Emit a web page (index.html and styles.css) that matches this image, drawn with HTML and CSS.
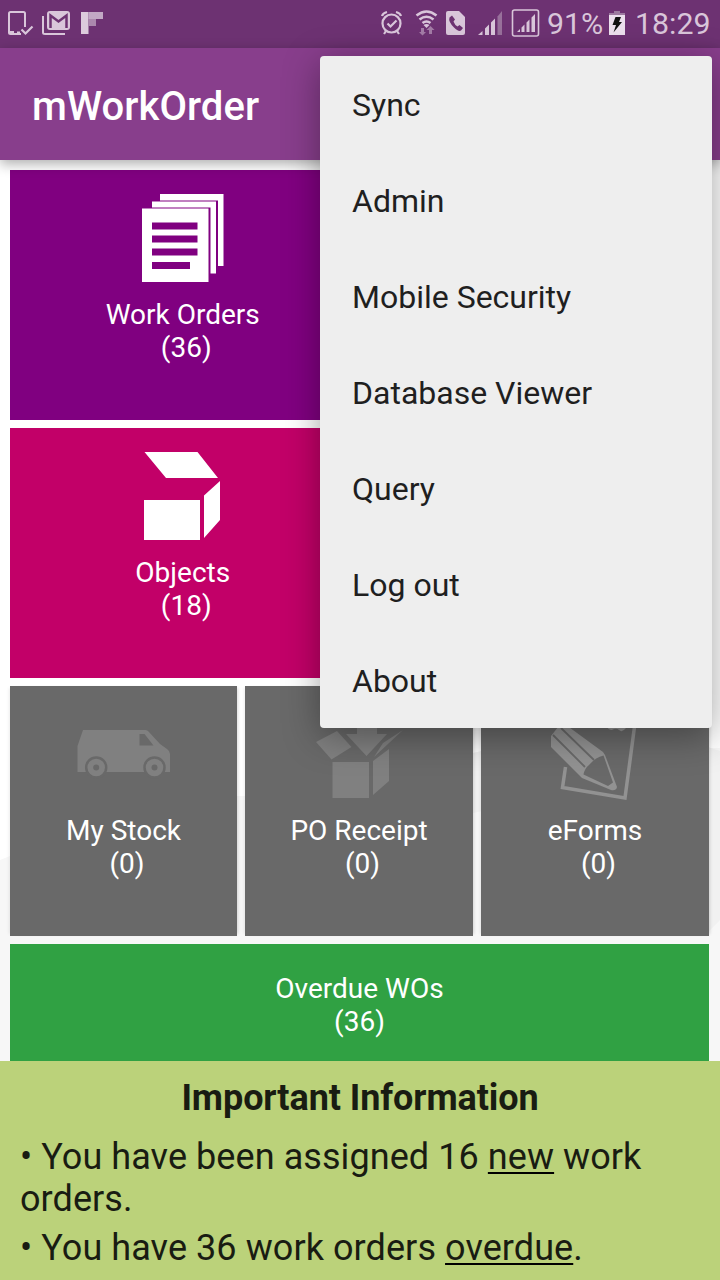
FILE: index.html
```html
<!DOCTYPE html>
<html lang="en">
<head>
<meta charset="utf-8">
<title>mWorkOrder</title>
<link rel="stylesheet" href="styles.css">
</head>
<body>
<div class="screen">
  <header class="status">
    <svg class="status-left" width="110" height="48" viewBox="0 0 110 48">
      <path d="M21 34H10.500Q9 34 9 32.500V13.500Q9 12 10.500 12H23.500Q25 12 25 13.500V27M9 32H14" fill="none" stroke="#d9c6da" stroke-width="2"/>
      <path d="M9 31h5v3H9zM17 31.500h3V34h-3z" fill="#d9c6da"/>
      <path d="M21.500 29.500l4 4 7-7" fill="none" stroke="#d9c6da" stroke-width="2.200"/>
      <path d="M43 16V32.500Q43 34 45 34H65" fill="none" stroke="#d9c6da" stroke-width="2"/>
      <rect x="48" y="12" width="21" height="17" rx="2" fill="#d9c6da" stroke="#d9c6da" stroke-width="2"/>
      <path d="M50.500 28V15.500l8 6 8-6V28" fill="none" stroke="#6d3272" stroke-width="2.500"/>
      <path d="M81 12h7.500v22H81z" fill="#dccbdc"/><path d="M88.500 12H103v7H88.500z" fill="#c2a8c5"/><path d="M88.500 19H96v7h-7.500z" fill="#ab88ad"/>
    </svg>
    <svg class="status-right" width="172" height="48" viewBox="370 0 172 48">
      <g fill="none" stroke="#d9c6da" stroke-width="2.200">
        <circle cx="391.500" cy="23.500" r="9"/><path d="M382 16q1-3 5-4M401 16q-1-3-5-4M386 31l-2 3M397 31l2 3M387.500 23.500l3 3 6-6"/>
      </g>
      <g fill="none" stroke="#d9c6da" stroke-width="2.600">
        <path d="M416.500 15.500q10-8 20 0M419.500 19.500q7-5.500 14 0M422.500 23q4-3 8 0"/>
      </g>
      <path d="M423.500 25q3-2 6 0l-3 3z" fill="#d9c6da"/>
      <path d="M421 28h3v4h2l-3.500 3.500L419 32h2zM429 34v-4h-2.500l4-4 4 4H432v4z" fill="#a37ca6"/>
      <path d="M448 11h11l6 6v16q0 2-2 2h-15q-2 0-2-2V13q0-2 2-2z" fill="#d9c6da"/>
      <path d="M449.500 17.500l2.500-2 3 4-1.500 2q1.500 4 4 5l2-1.500 3.500 3-2 2.500q-2.500 1.500-7-3-6-6-4.500-10z" fill="#6d3272"/>
      <path d="M478 35l4.500-4v4zM485 28.500l4-4V35h-4zM491 22.500l4-4V35h-4z" fill="#d9c6da"/>
      <path d="M497.500 16.500l4.500-5.500v24h-4.500z" fill="#98709b"/>
      <rect x="512.500" y="10" width="26" height="26" rx="2" fill="none" stroke="#d9c6da" stroke-width="1.600"/>
      <path d="M517 32l3-3v3zM521.500 27.500l3-3V32h-3zM526.500 22.500l3-3V32h-3zM531.500 17.500l3.500-3.500v18h-3.500z" fill="#d9c6da"/>
    </svg>
    <span class="percent">91%</span>
    <svg class="battery" width="16" height="24" viewBox="0 0 16 24">
      <path d="M0 2h5V0h6v2h5v2H0z" fill="#9d7aa0"/><path d="M0 4h16v20H0z" fill="#ecdfed"/>
      <path d="M6.500 6H12l-2 5h3L4.500 21.500 7 14H3.500z" fill="#111"/>
    </svg>
    <span class="clock">18:29</span>
  </header>
  <div class="appbar"><h1 class="title">mWorkOrder</h1></div>
  <main class="board">
    <svg class="backdrop" width="720" height="901" viewBox="0 160 720 901">
      <path d="M0 860L30 848 236 796H245L473 753 482 751 720 748V1061H0z" fill="#f7f7f7"/>
      <path d="M708 747L720 751V920L708 932zM473 753L482 751V811L473 813z" fill="#f1f1f1"/>
    </svg>
    <div class="row">
      <section class="tile orders">
        <svg class="icon" width="96" height="96" viewBox="135 190 96 96">
          <g fill="#fff"><path d="M160 194h63.500v72H218v-65.500h-58z"/><path d="M152 201.500h64v72h-5.500V207.500H152z"/><path d="M142 208.500h66.500V282H142z"/></g>
          <g fill="#800080"><path d="M152 222.500h45.500v7H152zM152 235.500h45.500v7H152zM152 248.500h45.500v7H152zM152 262h38v7h-38z"/></g>
        </svg>
        <p class="label">Work Orders
 (36)</p>
      </section>
      <section class="tile orders"></section>
    </div>
    <div class="row">
      <section class="tile objects">
        <svg class="icon" width="96" height="96" viewBox="135 448 96 96">
          <path d="M144.500 452H197.500L218 478H166zM144 500h56v40h-56zM204 495.500L220 481V520L204 538z" fill="#fff"/>
        </svg>
        <p class="label">Objects
 (18)</p>
      </section>
      <section class="tile objects"></section>
    </div>
    <div class="row thirds">
      <section class="tile muted">
        <svg class="icon" width="96" height="96" viewBox="75.500 706 96 96">
          <path d="M77 772V746l5.500-16H145q2 0 3 1.500L159.500 744l7 5q3 2 3 5v18z" fill="#808080"/>
          <path d="M139 734h5l9 11.500h-14z" fill="#696969"/>
          <g fill="#808080" stroke="#696969"><circle cx="95.700" cy="767.500" r="10" stroke-width="2.500"/><circle cx="154" cy="767.500" r="10" stroke-width="2.500"/></g>
          <g fill="#696969"><circle cx="95.700" cy="767.500" r="3"/><circle cx="154" cy="767.500" r="3"/></g>
        </svg>
        <p class="label">My Stock
 (0)</p>
      </section>
      <section class="tile muted">
        <svg class="icon" width="96" height="96" viewBox="311 706 96 96">
          <path d="M332.500 762H369v36h-36.500zM373 761L389 749V781L373 795zM316 742L337 731 351.500 747 331.500 759.500zM357 720h20v14h10L366.500 756 346 734h11zM374 757L383 743 403 730z" fill="#808080"/>
        </svg>
        <p class="label">PO Receipt
 (0)</p>
      </section>
      <section class="tile muted">
        <svg class="icon" width="96" height="96" viewBox="547 706 96 96">
          <path d="M565.500 767L562.500 787.500 625 798 635 723" fill="none" stroke="#929292" stroke-width="3.500"/>
          <path d="M606 725q3 7 8 4 3-1 5 1 3 3 7-2l4-8h-24z" fill="#929292"/>
          <path d="M551 736l11-14L603 752l2 3 12 32q-1 4-6 3L582 778l-2-2-29-29z" fill="#929292"/>
          <path d="M583.500 774.500q1-6 6-10 6-7 14-9l9.500 27-5 3.500z" fill="#696969"/>
          <path d="M553 735L585 767M561 728L594 760" stroke="#696969" stroke-width="1.800"/>
        </svg>
        <p class="label">eForms
 (0)</p>
      </section>
    </div>
    <section class="tile overdue"><p class="label">Overdue WOs
(36)</p></section>
  </main>
  <footer class="info">
    <h2 class="info-title">Important Information</h2>
    <p class="line">• You have been assigned 16 <span class="link">new</span> work orders.</p>
    <p class="line">• You have 36 work orders <span class="link">overdue</span>.</p>
  </footer>
  <nav class="menu">
    <div class="item">Sync</div>
    <div class="item">Admin</div>
    <div class="item">Mobile Security</div>
    <div class="item">Database Viewer</div>
    <div class="item">Query</div>
    <div class="item">Log out</div>
    <div class="item">About</div>
  </nav>
</div>
</body>
</html>
```

FILE: styles.css
```css
* { box-sizing: border-box; }
body { margin: 0; font-family: Roboto, "Liberation Sans", sans-serif; }
h1, h2, p { margin: 0; }
svg { display: block; flex: none; }

.screen {
  position: relative;
  width: 720px;
  height: 1280px;
  overflow: hidden;
  display: flex;
  flex-direction: column;
  background: #fff;
}

.status {
  flex: none;
  height: 48px;
  display: flex;
  align-items: center;
  background: #6d3272;
  color: #d9c6da;
  font-size: 30.300px;
  line-height: 48px;
}
.status-right { margin-left: 260px; }
.percent { width: 67px; padding-left: 5px; white-space: nowrap; }
.battery { margin: 0 10px 2px 0; }
.clock { white-space: nowrap; }

.appbar {
  position: relative;
  z-index: 1;
  flex: none;
  height: 112px;
  padding: 5px 32px 0;
  display: flex;
  align-items: center;
  background: #883e8c;
  box-shadow: 0 4px 12px rgba(0, 0, 0, .32);
}
.title { color: #fff; font-size: 40px; font-weight: 500; letter-spacing: .05px; }

.board {
  position: relative;
  flex: none;
  height: 901px;
  padding: 10px 11px 0 10px;
  display: flex;
  flex-direction: column;
  gap: 8px;
}
.backdrop { position: absolute; left: 0; top: 0; }
.row { position: relative; display: grid; grid-template-columns: 1fr 1fr; gap: 8px; height: 250px; }
.thirds { grid-template-columns: 227px 228px 228px; }
.tile {
  position: relative;
  padding-top: 20px;
  display: flex;
  flex-direction: column;
  align-items: center;
  gap: 12px;
}
.orders { background: #800080; }
.objects { background: #c20068; }
.muted { background: #696969; box-shadow: 3px 0 3px -2px rgba(0, 0, 0, .15), -3px 0 3px -2px rgba(0, 0, 0, .08); }
.overdue { flex: 1; background: #30a143; padding-top: 28px; }
.label {
  color: #fff;
  font-size: 28px;
  line-height: 33px;
  text-align: center;
  white-space: pre;
}

.info {
  flex: 1;
  padding: 16px 20px 0;
  background: #bbd27a;
  color: #191c12;
  position: relative;
}
.info-title { font-size: 36px; line-height: 42px; font-weight: 700; letter-spacing: -.08px; text-align: center; margin-bottom: 17px; }
.line { font-size: 36px; line-height: 42px; letter-spacing: .075px; margin-bottom: 7px; }
.link { text-decoration: underline #000; text-decoration-thickness: 2px; text-underline-offset: 3px; text-decoration-skip-ink: none; }

.menu {
  position: absolute;
  z-index: 2;
  left: 320px;
  top: 56px;
  width: 392px;
  height: 672px;
  border-radius: 4px;
  background: #eee;
  box-shadow: 0 8px 36px rgba(0, 0, 0, .36);
}
.item { height: 96px; padding: 3px 32px 0; line-height: 93px; font-size: 32px; color: #1f1f1f; }
```
